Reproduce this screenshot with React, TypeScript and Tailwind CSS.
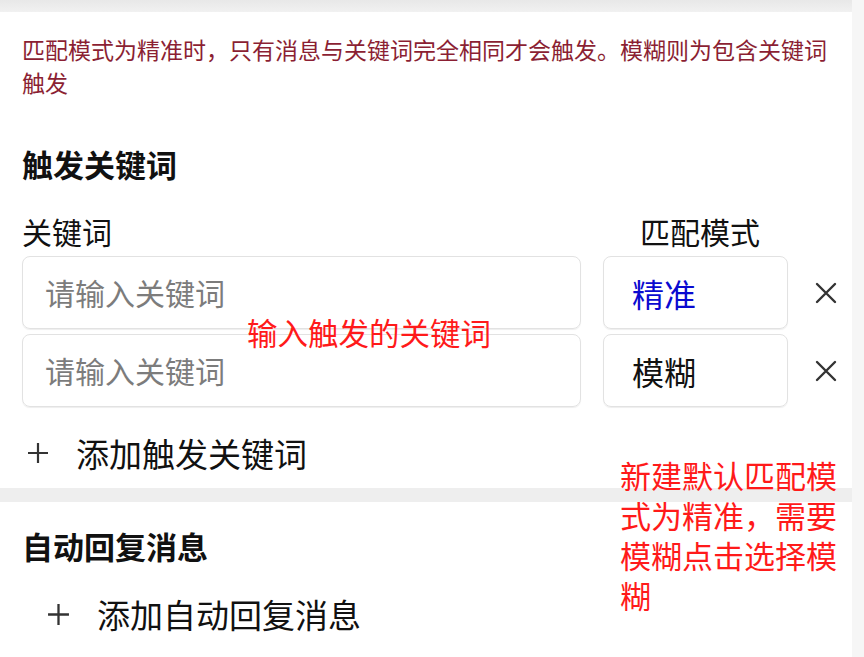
const font = { fontFamily: '"Noto Sans CJK SC", "Noto Sans", sans-serif' }

function CloseIcon() {
  return (
    <svg width="22" height="22" viewBox="0 0 22 22" fill="none" stroke="#333" strokeWidth="2.4" strokeLinecap="round">
      <path d="M2 2 L20 20 M20 2 L2 20" />
    </svg>
  )
}

function PlusIcon({ size = 22 }: { size?: number }) {
  return (
    <svg width={size} height={size} viewBox="0 0 22 22" fill="none" stroke="#333" strokeWidth="2.2">
      <path d="M11 1 V21 M1 11 H21" />
    </svg>
  )
}

type Row = { mode: string; active: boolean }

const rows: Row[] = [
  { mode: '精准', active: true },
  { mode: '模糊', active: false },
]

export default function App() {
  return (
    <div className="relative flex h-[657px] w-[864px] overflow-hidden bg-white text-[#111]" style={font}>
      <div className="w-[852px]">
        <div className="h-3 bg-gradient-to-b from-[#e8e8e8] to-[#f1f1f1]" />

        <p className="px-[22px] pt-[21px] text-[23px] leading-[33px] text-[#8b1f33]">
          匹配模式为精准时，只有消息与关键词完全相同才会触发。模糊则为包含关键词触发
        </p>

        <h2 className="mt-[45px] px-[22px] text-[31px] font-bold leading-[40px]">触发关键词</h2>

        <div className="mt-[27px] flex pl-[22px] text-[30px] leading-[40px]">
          <span className="flex-1">关键词</span>
          <span className="ml-[22px] w-[185px] pl-[37px]">匹配模式</span>
          <span className="w-16" />
        </div>

        <div className="mt-[5px] flex flex-col gap-[5px] pl-[22px]">
          {rows.map((r, i) => (
            <div key={i} className="flex h-[73px] items-stretch">
              <div className="flex flex-1 items-center rounded-lg border border-[#e2e2e2] pl-[22px] text-[30px] text-[#7c7c7c] shadow-[0_1px_1px_rgba(0,0,0,0.07)]">
                请输入关键词
              </div>
              <div
                className={`ml-[22px] flex w-[185px] items-center rounded-lg border border-[#e2e2e2] pl-[28px] text-[32px] shadow-[0_1px_1px_rgba(0,0,0,0.07)] ${
                  r.active ? 'text-[#0a0ad0]' : 'text-[#111]'
                }`}
              >
                {r.mode}
              </div>
              <div className="flex w-16 items-center pl-[27px]">
                <CloseIcon />
              </div>
            </div>
          ))}
        </div>

        <div className="mt-[26px] flex items-center pl-[27px] text-[33px] leading-[40px]">
          <PlusIcon />
          <span className="ml-[27px]">添加触发关键词</span>
        </div>

        <div className="mt-[15px] h-[14px] bg-[#eeeeee]" />

        <h2 className="mt-[24px] px-[22px] text-[31px] font-bold leading-[40px]">自动回复消息</h2>

        <div className="mt-[28px] flex items-center pl-[47px] text-[33px] leading-[40px]">
          <PlusIcon size={23} />
          <span className="ml-[27px]">添加自动回复消息</span>
        </div>
      </div>
      <div className="flex-1 bg-[#f6f6f6]" />

      <span className="absolute left-[247px] top-[314px] text-[30.5px] leading-[36px] text-[#ff1a1a]">输入触发的关键词</span>
      <p className="absolute left-[620px] top-[455px] w-[218px] text-[31px] leading-[40px] text-[#ff1a1a]">
        新建默认匹配模式为精准，需要模糊点击选择模糊
      </p>
    </div>
  )
}
